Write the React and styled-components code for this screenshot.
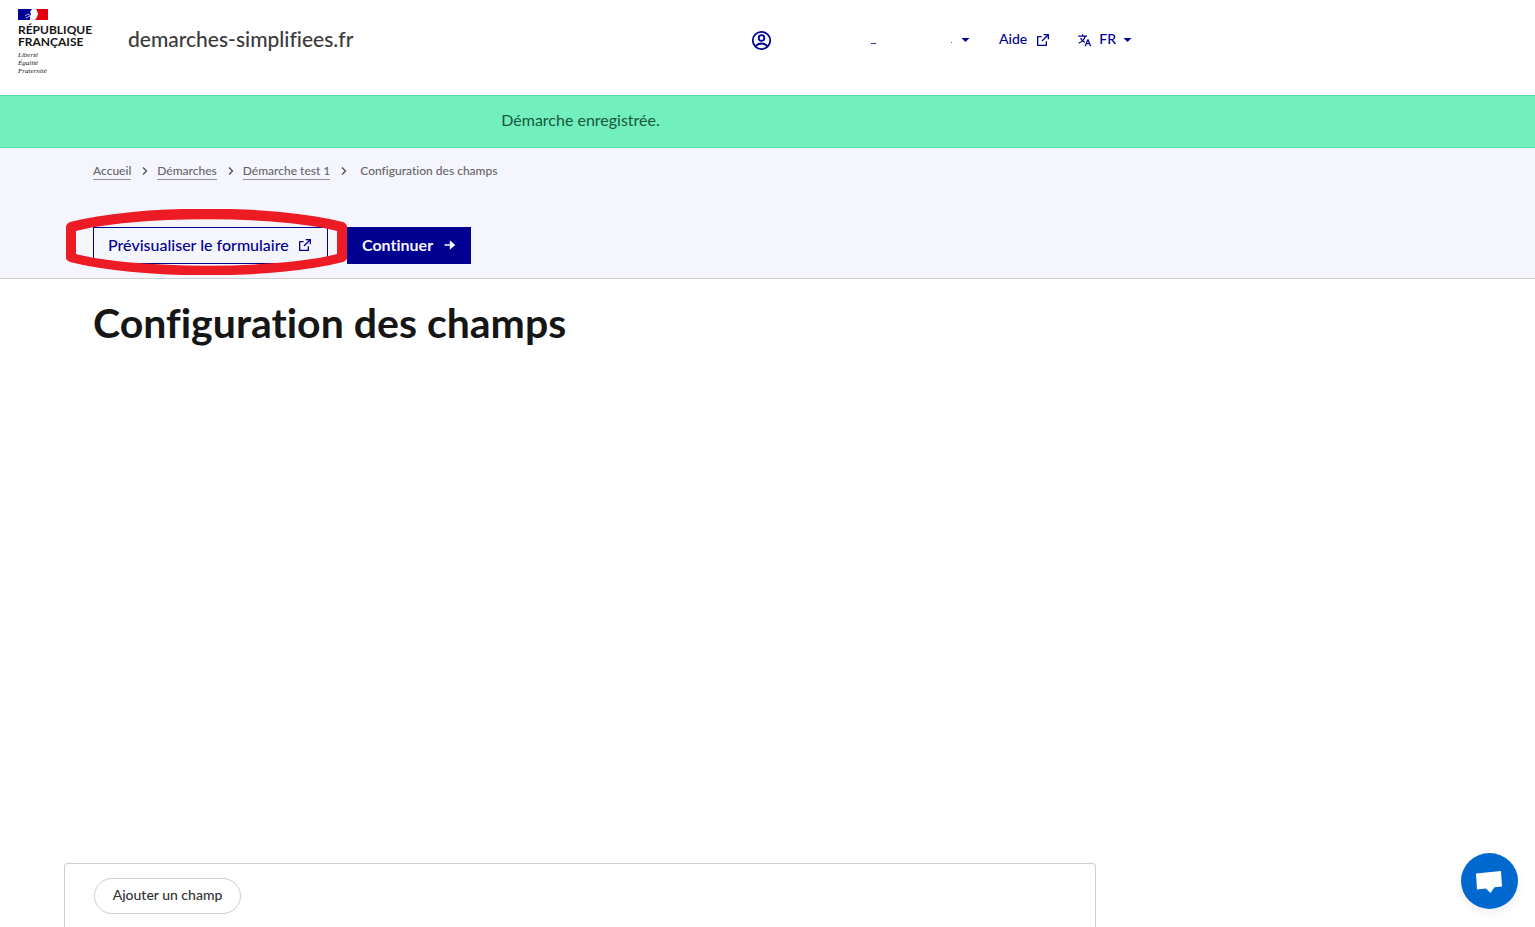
import React from "react";
import styled, { createGlobalStyle } from "styled-components";

const BLUE = "#000091";
const LINE = "#cecece";

const GlobalStyle = createGlobalStyle`
  *, *::before, *::after { box-sizing: border-box; }
  body { margin: 0; background: #fff; color: #161616; font: 16px/24px Lato, "Noto Sans", sans-serif; font-variant-ligatures: none; }
  button { font: inherit; color: inherit; background: none; border: 0; padding: 0; cursor: pointer; font-variant-ligatures: none; }
  a { color: inherit; text-decoration: none; }
  h1, ol, p { margin: 0; padding: 0; }
  svg { display: block; flex: none; }
`;

const Page = styled.div`
  min-height: 100vh;
  display: flex;
  flex-direction: column;
`;

const Header = styled.header`
  height: 95px;
  padding: 9px 18px 0;
  display: flex;
  align-items: flex-start;
`;

const HeaderBody = styled.div`
  flex: 1;
  max-width: 1114px;
  display: flex;
  align-items: flex-start;
`;

const Logo = styled.a`
  width: 110px;
  color: #161616;
`;

const LogoName = styled.span`
  display: block;
  margin-top: 4px;
  font: 700 12px/12px Lato, sans-serif;
`;

const Motto = styled.span`
  display: block;
  margin-top: 3px;
  font: italic 7px/8px "Liberation Serif", serif;
`;

const ServiceName = styled.a`
  margin-top: 16px;
  font-size: 21px;
  line-height: 28px;
  font-weight: 500;
  color: #3a3a3a;
`;

const Tools = styled.nav`
  margin: 18px 0 0 auto;
  display: flex;
  align-items: center;
  color: ${BLUE};
  font-size: 14px;
  font-weight: 500;
  line-height: 24px;
  svg { margin-top: 2px; }
`;

const AccountButton = styled.button`
  display: flex;
  align-items: center;
  margin-right: 29px;
`;

const HelpLink = styled.a`
  display: flex;
  align-items: center;
  gap: 8px;
  margin-right: 26px;
`;

const LanguageButton = styled.button`
  display: flex;
  align-items: center;
  gap: 7px;
`;

const Notice = styled.div`
  height: 53px;
  padding: 12px 374px 0 0;
  background: #71efbc;
  border-top: 1px solid #55d5a0;
  border-bottom: 1px solid #58e5ab;
  color: #18573c;
  text-align: center;
`;

const SubHeader = styled.section`
  height: 131px;
  padding: 11px 93px 0;
  background: #f5f5fe;
  border-bottom: 1px solid ${LINE};
`;

const Breadcrumb = styled.ol`
  display: flex;
  align-items: center;
  list-style: none;
  color: #666;
  font-size: 12px;
  font-weight: 500;
  line-height: 16px;
  height: 24px;
`;

const Crumb = styled.li`
  display: flex;
  align-items: center;
  a { border-bottom: 1px solid #929292; }
  svg { margin: 0 8px 0 10px; }
  &:last-child { margin-left: 4px; }
`;

const Actions = styled.div`
  margin-top: 44px;
  display: flex;
  gap: 19px;
`;

const Highlighted = styled.div`
  position: relative;
`;

const Ring = styled.svg`
  position: absolute;
  left: -27px;
  top: -18px;
  pointer-events: none;
`;

const ActionLink = styled.a`
  display: flex;
  align-items: center;
  justify-content: space-between;
  width: ${(p) => (p.$primary ? "124px" : "235px")};
  height: 37px;
  padding: 0 14px 2px;
  border: 1px solid ${BLUE};
  background: ${(p) => (p.$primary ? BLUE : "transparent")};
  color: ${(p) => (p.$primary ? "#f5f5fe" : BLUE)};
  font-weight: ${(p) => (p.$primary ? 700 : 500)};
  svg { margin-top: 1px; }
`;

const Main = styled.main`
  flex: 1;
  display: flex;
  flex-direction: column;
  padding: 20px 439px 0 64px;
`;

const Title = styled.h1`
  margin-left: 29px;
  font-size: 41px;
  line-height: 48px;
  font-weight: 700;
  white-space: nowrap;
`;

const Editor = styled.section`
  margin-top: auto;
  height: 64px;
  padding: 14px 29px 0;
  border: 1px solid ${LINE};
  border-bottom: 0;
  border-radius: 4px 4px 0 0;
`;

const AddButton = styled.button`
  height: 36px;
  min-width: 147px;
  padding: 0 15px 2px;
  border: 1px solid ${LINE};
  border-radius: 18px;
  font-size: 14px;
  font-weight: 500;
  line-height: 32px;
  color: #333;
`;

const ChatButton = styled.button`
  position: fixed;
  right: 17px;
  bottom: 18px;
  width: 57px;
  height: 56px;
  border-radius: 50%;
  background: #0069d0;
  box-shadow: 0 4px 10px rgba(0, 0, 0, 0.07);
`;

const Flag = () => (
  <svg width="30" height="11" viewBox="0 0 30 11">
    <path fill="#000091" d="M0 0h14l-2 3 1 2-1 2v4H0z" />
    <path fill="#e1000f" d="M18 0h12v11H17l2-3 1-3-1-3z" />
    <path d="M7 7l3-2 3 2M8 9l4-2" stroke="#b4b4ea" fill="none" />
    <path d="M12 8l3 3" stroke="#d6d6ee" />
  </svg>
);

const External = () => (
  <svg width="16" height="16" viewBox="0 0 24 24" fill="currentColor">
    <path d="M10 6v2H5v11h11v-5h2v6a1 1 0 0 1-1 1H4a1 1 0 0 1-1-1V7a1 1 0 0 1 1-1h6zm11-3v8h-2V6.400l-7.800 7.800-1.400-1.400L17.600 5H13V3h8z" />
  </svg>
);

const Caret = () => (
  <svg width="9" height="4" viewBox="0 0 9 4" fill="currentColor">
    <path d="M.5 0h8l-4 4z" />
  </svg>
);

const Account = () => (
  <svg width="21" height="21" viewBox="0 0 21 21" fill="none" stroke="currentColor" strokeWidth="1.800">
    <circle cx="10.500" cy="10.500" r="8.700" />
    <circle cx="10.500" cy="8" r="2.800" />
    <path d="M4.500 16.500c1.700-2.400 3.700-3 6-3s4.300.6 6 3" />
  </svg>
);

const MaskedAddress = () => (
  <svg width="189" height="8" viewBox="0 0 189 8" fill="currentColor">
    <rect x="99" y="7" width="5" height="1" opacity=".8" />
    <rect x="179" y="6" width="1" height="1" opacity=".6" />
  </svg>
);

const Translate = () => (
  <svg width="15" height="15" viewBox="0 0 24 24" fill="currentColor">
    <path d="M18.500 10l4.400 11h-2.155l-1.201-3h-4.090l-1.199 3h-2.154L16.500 10h2zM10 2v2h6v2h-1.968a18.222 18.222 0 0 1-3.620 6.301 14.864 14.864 0 0 0 2.336 1.707l-.751 1.878A17.015 17.015 0 0 1 9 13.725a16.676 16.676 0 0 1-6.201 3.548l-.536-1.929a14.700 14.700 0 0 0 5.327-3.042A18.078 18.078 0 0 1 4.767 8h2.240A16.032 16.032 0 0 0 9 10.877a16.165 16.165 0 0 0 2.910-4.876L2 6V4h6V2h2zm7.500 10.885L16.253 16h2.492L17.500 12.885z" />
  </svg>
);

const Chevron = () => (
  <svg width="8" height="10" viewBox="0 0 8 10" fill="none" stroke="#555" strokeWidth="1.400">
    <path d="M2 1.500L5.500 5 2 8.500" />
  </svg>
);

const Arrow = () => (
  <svg width="12" height="12" viewBox="0 0 12 12" fill="currentColor">
    <path d="M.5 5.200h5.300V1.200L11.300 6l-5.500 4.800v-4H.5z" />
  </svg>
);

const CRUMBS = ["Accueil", "Démarches", "Démarche test 1"];

export default function App() {
  return (
    <Page>
      <GlobalStyle />
      <Header>
        <HeaderBody>
          <Logo href="#">
            <Flag />
            <LogoName>RÉPUBLIQUE<br />FRANÇAISE</LogoName>
            <Motto>Liberté<br />Égalité<br />Fraternité</Motto>
          </Logo>
          <ServiceName href="#">demarches-simplifiees.fr</ServiceName>
          <Tools>
            <AccountButton type="button" aria-label="Mon compte">
              <Account />
              <MaskedAddress />
              <Caret />
            </AccountButton>
            <HelpLink href="#">Aide <External /></HelpLink>
            <LanguageButton type="button">
              <Translate />FR<Caret />
            </LanguageButton>
          </Tools>
        </HeaderBody>
      </Header>
      <Notice role="status">Démarche enregistrée.</Notice>
      <SubHeader>
        <Breadcrumb>
          {CRUMBS.map((label) => (
            <Crumb key={label}><a href="#">{label}</a><Chevron /></Crumb>
          ))}
          <Crumb>Configuration des champs</Crumb>
        </Breadcrumb>
        <Actions>
          <Highlighted>
            <ActionLink href="#">Prévisualiser le formulaire <External /></ActionLink>
            <Ring width="281" height="66" viewBox="0 0 281 66" fill="#ed1c24" fillRule="evenodd">
              <path d="M0 18Q0 15 4 13A170 33 0 0 1 277 13Q281 15 281 18V49Q281 51 277 53A170 33 0 0 1 4 53Q0 51 0 49ZM10 22V45A150 23 0 0 0 271 45V22A150 23 0 0 0 10 22Z" />
            </Ring>
          </Highlighted>
          <ActionLink href="#" $primary>Continuer <Arrow /></ActionLink>
        </Actions>
      </SubHeader>
      <Main>
        <Title>Configuration des champs</Title>
        <Editor>
          <AddButton type="button">Ajouter un champ</AddButton>
        </Editor>
      </Main>
      <ChatButton type="button" aria-label="Ouvrir la messagerie">
        <svg width="57" height="56" viewBox="0 0 57 56" fill="#fff">
          <path d="M15 20.500L40 18l1 15.500-7.500.8L29.500 40l-4.500-4.500-9 1z" />
        </svg>
      </ChatButton>
    </Page>
  );
}
